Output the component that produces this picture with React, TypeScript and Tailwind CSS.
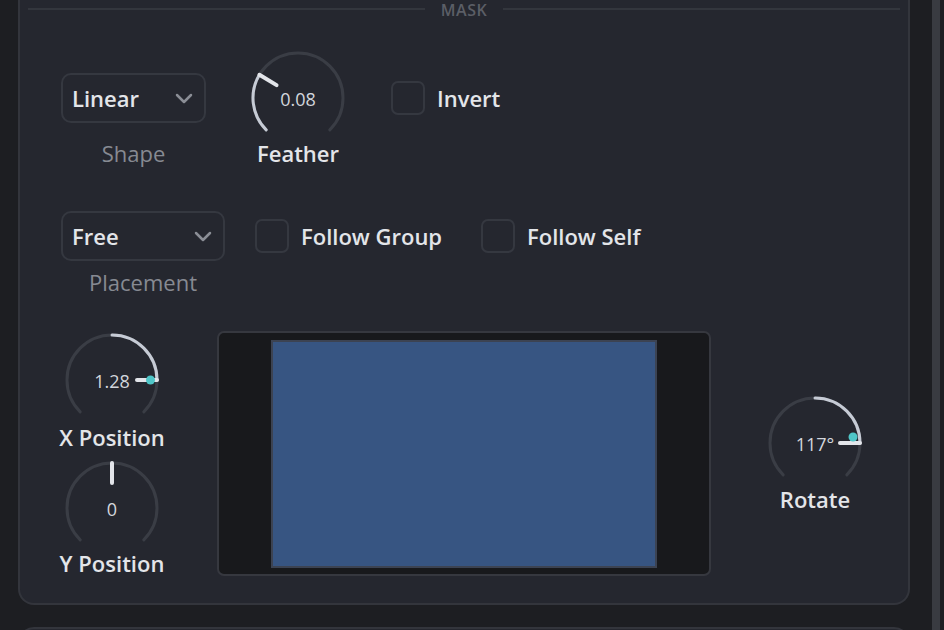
import React from 'react';

const CX = 50;
const CY = 50;
const R = 45;

function pt(angle: number, r: number = R) {
  const a = (angle * Math.PI) / 180;
  return { x: CX + r * Math.sin(a), y: CY - r * Math.cos(a) };
}

function arcPath(from: number, to: number) {
  const p0 = pt(from);
  const p1 = pt(to);
  const large = to - from > 180 ? 1 : 0;
  return `M ${p0.x} ${p0.y} A ${R} ${R} 0 ${large} 1 ${p1.x} ${p1.y}`;
}

interface KnobProps {
  value: string;
  angle: number;
  arcFrom?: number;
  dotAngle?: number;
}

function Knob({ value, angle, arcFrom, dotAngle }: KnobProps) {
  const inner = pt(angle, 25);
  const outer = pt(angle, 45);
  const dot = dotAngle !== undefined ? pt(dotAngle, 38.5) : null;

  return (
    <div className="relative w-[100px] h-[86px]">
      <svg width="100" height="86" viewBox="0 0 100 86" className="absolute inset-0">
        <path d={arcPath(-135, 135)} fill="none" stroke="#3a3d45" strokeWidth="3" strokeLinecap="round" />
        {arcFrom !== undefined && (
          <path d={arcPath(arcFrom, angle)} fill="none" stroke="#c6cbd5" strokeWidth="3" strokeLinecap="round" />
        )}
        <line x1={inner.x} y1={inner.y} x2={outer.x} y2={outer.y} stroke="#e3e5ea" strokeWidth="4" strokeLinecap="round" />
        {dot && <circle cx={dot.x} cy={dot.y} r="4.5" fill="#4fc6c8" />}
      </svg>
      <span className="absolute left-0 right-0 top-[39px] text-center text-[18px] leading-[24px] text-[#d3d6dc]">
        {value}
      </span>
    </div>
  );
}

function Chevron() {
  return (
    <svg width="18" height="11" viewBox="0 0 18 11">
      <path d="M2 2 L9 9 L16 2" fill="none" stroke="#8b8e96" strokeWidth="2.5" strokeLinecap="round" strokeLinejoin="round" />
    </svg>
  );
}

function Dropdown({ label, width }: { label: string; width: string }) {
  return (
    <div
      className={`${width} h-[50px] flex items-center justify-between pl-[9px] pr-[11px] rounded-[10px] border-2 border-[#353840]`}
    >
      <span className="text-[22px] leading-[30px] font-semibold text-[#e3e5e9]">{label}</span>
      <Chevron />
    </div>
  );
}

function Checkbox({ label }: { label: string }) {
  return (
    <div className="flex items-center gap-[12px]">
      <div className="w-[34px] h-[34px] rounded-[7px] border-2 border-[#353840]" />
      <span className="text-[22px] leading-[30px] font-semibold text-[#e3e5e9] whitespace-nowrap">{label}</span>
    </div>
  );
}

export default function App() {
  return (
    <div className="w-[944px] h-[630px] overflow-hidden flex bg-[#1d1e22] font-['Open_Sans',sans-serif]">
      <div className="w-[932px] pl-[18px] flex flex-col">
        {/* Mask panel */}
        <div className="w-[892px] h-[605px] shrink-0 bg-[#25272f] border-2 border-t-0 border-[#33353c] rounded-b-[16px]">
          {/* header */}
          <div className="h-[20px] flex items-start px-[8px]">
            <div className="flex-1 mt-[8px] h-[2px] bg-[#33363d]" />
            <span className="px-[16px] text-[16px] font-semibold tracking-[0.5px] text-[#5b5e66] leading-[20px]">
              MASK
            </span>
            <div className="flex-1 mt-[8px] h-[2px] bg-[#33363d]" />
          </div>

          {/* Shape / Feather / Invert */}
          <div className="mt-[28px] pl-[41px] flex items-start">
            <div className="w-[145px] flex flex-col items-center mt-[25px]">
              <Dropdown label="Linear" width="w-[145px]" />
              <span className="mt-[16px] text-[22px] leading-[28px] text-[#878a92]">Shape</span>
            </div>
            <div className="ml-[42px] w-[100px] flex flex-col items-center">
              <Knob value="0.08" angle={-59} arcFrom={-135} />
              <span className="mt-[5px] text-[22px] leading-[28px] font-semibold text-[#e3e5e9] whitespace-nowrap">Feather</span>
            </div>
            <div className="ml-[43px] mt-[33px]">
              <Checkbox label="Invert" />
            </div>
          </div>

          {/* Placement */}
          <div className="mt-[44px] pl-[41px] flex items-start">
            <div className="w-[164px] flex flex-col items-center">
              <Dropdown label="Free" width="w-[164px]" />
              <span className="mt-[7px] text-[22px] leading-[28px] text-[#878a92]">Placement</span>
            </div>
            <div className="ml-[30px] mt-[8px] w-[226px]">
              <Checkbox label="Follow Group" />
            </div>
            <div className="mt-[8px]">
              <Checkbox label="Follow Self" />
            </div>
          </div>

          {/* Position / preview / rotate */}
          <div className="mt-[34px] pl-[37px] flex items-start">
            <div className="w-[110px] flex flex-col items-center">
              <Knob value="1.28" angle={90} arcFrom={0} dotAngle={90} />
              <span className="mt-[7px] text-[22px] leading-[28px] font-semibold text-[#e3e5e9] whitespace-nowrap">X Position</span>
              <div className="mt-[7px]">
                <Knob value="0" angle={0} />
              </div>
              <span className="mt-[5px] text-[22px] leading-[28px] font-semibold text-[#e3e5e9] whitespace-nowrap">Y Position</span>
            </div>
            <div className="ml-[50px] mt-[1px] w-[494px] h-[245px] flex items-center justify-center rounded-[7px] border-2 border-[#36383f] bg-[#18191c]">
              <div className="w-[386px] h-[228px] bg-[#375582] border-2 border-[#3c4352]" />
            </div>
            <div className="ml-[54px] mt-[63px] w-[100px] flex flex-col items-center">
              <Knob value="117°" angle={90} arcFrom={0} dotAngle={81} />
              <span className="mt-[6px] text-[22px] leading-[28px] font-semibold text-[#e3e5e9]">Rotate</span>
            </div>
          </div>
        </div>

        {/* next panel */}
        <div className="mt-[22px] w-[892px] h-[40px] shrink-0 bg-[#25272f] border-2 border-b-0 border-[#33353c] rounded-t-[16px]" />
      </div>
      <div className="w-[8px] h-full bg-[#393b41]" />
    </div>
  );
}
